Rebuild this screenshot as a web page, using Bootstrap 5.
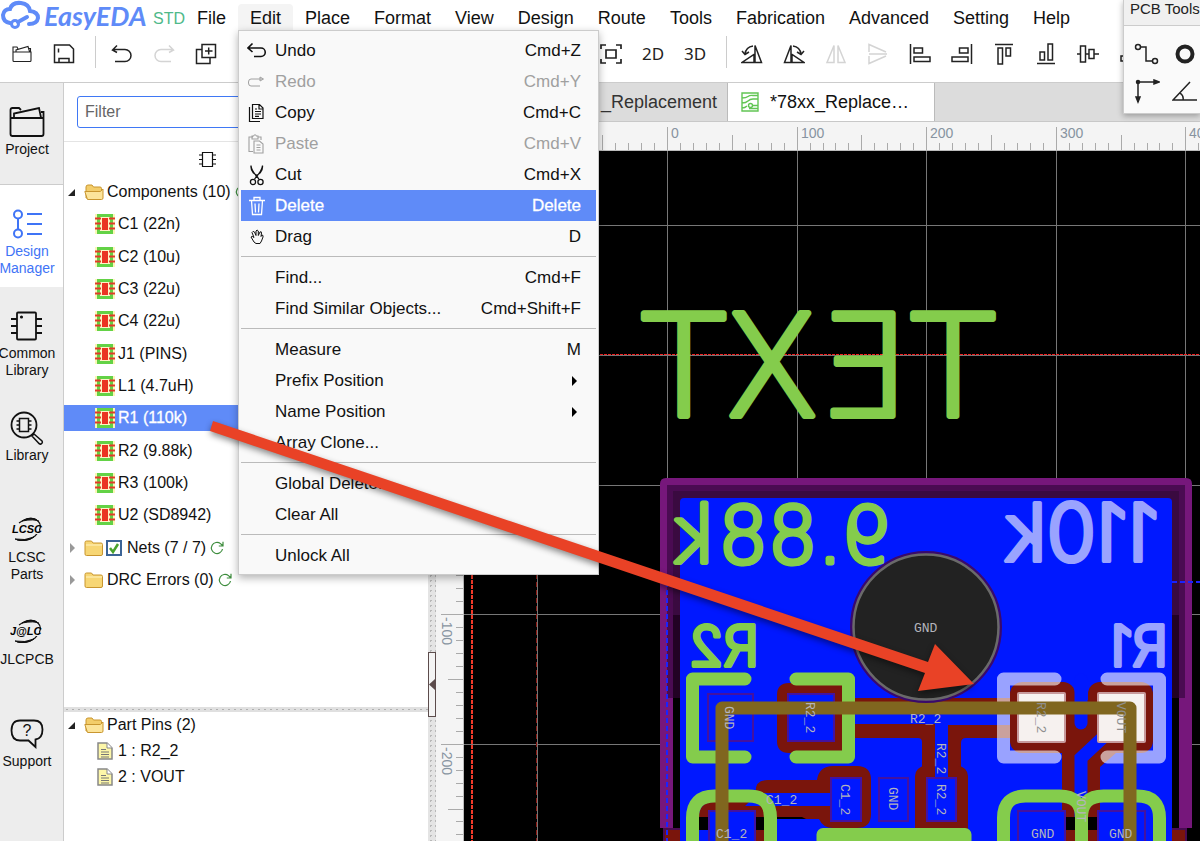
<!DOCTYPE html>
<html lang="en">
<head>
<meta charset="utf-8">
<meta name="viewport" content="width=device-width, initial-scale=1">
<title>EasyEDA STD</title>
<link rel="stylesheet" href="https://cdn.jsdelivr.net/npm/bootstrap@5.3.0/dist/css/bootstrap.min.css">
<style>
:root{--ui-blue:#5f8bf8;--line:#ccc}
body{font-family:"Liberation Sans",Arial,sans-serif;color:#111;background:#fff;line-height:1.25}
svg{display:block;flex:none}
.ico{fill:none;stroke:currentColor;stroke-width:1.5}
.app-head{border-bottom:1px solid var(--line)}
.logo-word{font:italic 700 27px/31px Lato,sans-serif;color:var(--ui-blue);width:105px}
.logo-std{font-size:16px;color:#4fb98a;width:40px;padding-top:9px}
.menu-bar{font-size:18px}
.menu-bar .menu-btn{display:block;border:0;background:none;padding:0 12px;height:28px;line-height:28px;color:#111}
.menu-bar .menu-btn.open{background:#f4f4f4;border-radius:4px 4px 0 0}
.edit-menu{top:26px;left:0;width:361px;z-index:20;background:#f9f9f9;border:1px solid var(--line);box-shadow:0 3px 8px rgba(0,0,0,.3);padding:4px 2px 3px;font-size:17px}
.edit-menu .mi{display:flex;align-items:center;width:100%;height:31px;border:0;background:none;color:#111;padding:0 15px 0 6px;text-align:left}
.edit-menu .mi:disabled{color:#a0a0a0}
.edit-menu .mi.hot{background:var(--ui-blue);color:#fff;-webkit-text-stroke:.3px #fff}
.edit-menu .mi-ico{width:28px;flex:none}
.edit-menu hr{margin:4px 0 5px;border-top:1px solid #bbb;opacity:1}
.tool-row{height:46px;font-size:17px}
.tool-group{margin-top:-3px}
.tool-btn{width:42px;height:42px;border:0;background:none;padding:0;display:flex;align-items:center;justify-content:center;color:#222;flex:none}
.tool-btn:disabled{color:#d4d4d4}
.tool-sep{width:1px;height:32px;background:#ccc;flex:none}
.tool-font{font-family:"Noto Sans",sans-serif;font-size:17px}
.align-set{width:414px}
.side{width:64px;background:#ededed;border-right:1px solid var(--line);font-size:14px;line-height:17px;overflow:hidden}
.side-btn{height:102px;width:63px;border:0;background:none;padding:22px 9px 0 0;display:flex;flex-direction:column;align-items:center;color:#111}
.side-btn .box{height:34px;margin-bottom:2px;display:flex;align-items:center}
.side-btn.line-b{border-bottom:1px solid var(--line)}
.side-btn.now{background:#fff;color:#3f74f6;width:64px;padding-right:10px}
.tree-pane{width:364px;font-size:16px}
.filter-box{border:1px solid #3f78f5;border-radius:3px;height:32px;width:340px;padding:0 7px;font-size:16px;color:#333}
.filter-box::placeholder{color:#666}
.filter-wrap{padding:13px 0 13px 13px;border-bottom:1px solid #e4e4e4}
.tree-list{height:414px}
.row-26{height:26px;display:flex;align-items:center;white-space:nowrap}
.row-26 .row-ico{margin-right:3px}
.leaf{padding-left:30px}
.leaf .row-ico{margin-right:2px}
.leaf.sel{background:var(--ui-blue);color:#fff;-webkit-text-stroke:.3px #fff}
.twist{width:20px;padding-left:3px;flex:none}
.h-split{height:5px;background:#e0e0e0 radial-gradient(#b0b0b0 1px,transparent 1px) 0 0/6px 5px}
.net-check{appearance:none;width:16px;height:16px;border:2px solid #3c6496;background:#fff;margin:0 5px 0 2px;flex:none;background-image:url("data:image/svg+xml,%3Csvg xmlns='http://www.w3.org/2000/svg' viewBox='0 0 12 12'%3E%3Cpath d='M2 6l3 4 5-8' fill='none' stroke='%234aa32c' stroke-width='2.5'/%3E%3C/svg%3E")}
.pins-pane{height:129px}
.v-split{width:8px;background:#e4e4e4 radial-gradient(#b8b8b8 1px,transparent 1px) 0 0/5px 5px}
.v-grip{top:569px;left:0;width:8px;height:65px;background:#f4f4f4;border:1px solid #5c4c4c;padding:0}
.tab-bar{height:39px;background:#dcdcdc;border-bottom:1px solid #c8c8c8;font-size:18px}
.doc-tab{border:0;border-right:1px solid #bbb;background:none;color:#333}
.doc-tab.first-doc{width:292px;padding:0 10px;text-align:right}
.doc-tab.now{width:207px;background:#fff;color:#111;padding:0 13px;display:flex;align-items:center;gap:11px}
.ruler-bg{background:#f4f4f4}
.ruler-bg text{font-size:14px;fill:#8793a0}
.v-rule{width:28px;border-right:1px solid #bbb}
.h-rule{height:29px;border-bottom:1px solid #bbb}
.pcb-area{background:#000}
.pcb-area svg{width:100%;height:100%}
.net-name{font:13px "Liberation Mono",monospace;fill:#b4b4bc}
.silk{font-family:Inter,sans-serif;font-weight:300;stroke-linejoin:round}
.silk .wide{font-family:"DejaVu Sans Light","DejaVu Sans",sans-serif;font-weight:200}
.pcb-tools{top:0;right:0;width:77px;height:114px;background:#fafafa;border:1px solid var(--line);border-width:0 0 1px 1px;box-shadow:0 2px 6px rgba(0,0,0,.3);z-index:15;overflow:hidden}
.pcb-tools .cap{height:26px;background:#f0f0f0;border-bottom:1px solid var(--line);font-size:15px;line-height:17px;padding-left:6px;white-space:nowrap;color:#222}
.pcb-tools .pad-set{width:84px;padding:9px 0 0 4px}
.pcb-tools .tp{border:0;background:none;padding:0;width:38px;height:37px;display:flex;align-items:center;justify-content:center;color:#222}
.note-arrow{inset:0;width:100%;height:100%;z-index:30;pointer-events:none}
</style>
</head>
<body class="vh-100 d-flex flex-column overflow-hidden position-relative">

<svg width="0" height="0" class="position-absolute" aria-hidden="true">
  <symbol id="chip" viewBox="0 0 22 22"><rect x="1" y="1" width="20" height="20" fill="#fbf6b8"/><path d="M4.500 2.500h13v17h-13z" fill="#fdf3c4" stroke="#63d246" stroke-width="3"/><path d="M1 5.500h6M1 10.500h6M1 15.500h6M15 5.500h6M15 10.500h6M15 15.500h6" stroke="#e23a2a" stroke-width="2"/><path d="M8 5h6v12H8z" fill="#ea3323"/></symbol>
  <symbol id="fold" viewBox="0 0 20 18"><path d="M1 15V3.500Q1 2 2.500 2h5L9 4h8q1.500 0 1.500 1.500V15q0 1.500-1.500 1.500H2.500Q1 16.500 1 15z" fill="#f7d674" stroke="#c9962f"/><path d="M2 6h16" stroke="#fff3c0"/></symbol>
  <symbol id="foldopen" viewBox="0 0 20 18"><path d="M2 15V4q0-2 2-2h4l1.500 2H16q1.500 0 1.500 1.500V15z" fill="#f3cd6a" stroke="#c9962f"/><path d="M.8 8.500h15.500L19 6v9q0 1.500-1.500 1.500h-14z" fill="#fce49a" stroke="#c9962f"/></symbol>
  <symbol id="page" viewBox="0 0 16 18"><path d="M1 1h9l5 5v11H1z" fill="#fcf6a8" stroke="#888" stroke-width="1.500"/><path d="M10 1v5h5" fill="#fff" stroke="#888"/><path d="M4 7.500h5M4 10h8M4 12.500h8M4 15h8" stroke="#777"/></symbol>
  <symbol id="again" viewBox="0 0 14 14"><path d="M12.500 8A5.600 5.600 0 1 1 10.500 2.600L12.500 4.500M13 .8V5H8.800" fill="none" stroke="#3c8c3c" stroke-width="1.200"/></symbol>
  <symbol id="oval" viewBox="0 0 34 26"><path d="M9 6Q20-2 28 4Q34 10 25 19Q17 25 7 23" fill="none" stroke="#111" stroke-width="1.200"/><path d="M12 4Q22-2 29 4.500Q25 1.500 12 4zM24 20Q16 26 5 22Q15 24 24 20z" fill="#111" stroke="#111"/></symbol>
</svg>

<header class="app-head">
  <div class="d-flex" style="height:36px">
    <div class="d-flex">
      <svg width="44" height="32" viewBox="0 0 44 32" fill="none" stroke="#5f8bf8" stroke-width="4" stroke-linecap="round"><path d="M10 23Q3 22 3 15Q4 9 10 9Q12 2 21 3Q29 4 30 11Q38 12 38 18Q37 24 29 24"/><circle cx="15" cy="24" r="3.500" stroke-width="3"/><path d="M18 22L27 17"/></svg>
      <span class="logo-word">EasyEDA</span>
      <span class="logo-std ps-1">STD</span>
    </div>
    <nav class="menu-bar d-flex pt-1" aria-label="Main" style="margin-left:-4px">
      <button class="menu-btn">File</button>
      <div class="position-relative">
        <button class="menu-btn open" aria-expanded="true">Edit</button>
        <div class="edit-menu position-absolute" role="menu">
          <button class="mi"><span class="mi-ico"><svg class="ico" width="20" height="20" viewBox="0 0 20 20"><path d="M5.500 2.500L1 7l4.500 4M1 7h13a4 4 0 0 1 0 8.500H7" stroke-width="1.600"/></svg></span>Undo<span class="ms-auto">Cmd+Z</span></button>
          <button class="mi" disabled><span class="mi-ico"><svg class="ico" width="20" height="20" viewBox="0 0 20 20"><path d="M15 7H4q-2.500 0-2.500 3v1q0 3 2.500 3h9M13 5l3.500 2-3.500 2z" stroke-width="1"/></svg></span>Redo<span class="ms-auto">Cmd+Y</span></button>
          <button class="mi"><span class="mi-ico"><svg class="ico" width="20" height="20" viewBox="0 0 20 20"><path d="M5.500 1.500h7l3.500 3.500v10.500H5.500zM12 2v4h4M2.500 4v14.500H13M8 6h2M8 8.500h6M8 11h6M8 13.300h4" stroke-width="1.200"/></svg></span>Copy<span class="ms-auto">Cmd+C</span></button>
          <button class="mi" disabled><span class="mi-ico"><svg class="ico" width="20" height="20" viewBox="0 0 20 20"><path d="M6 3H2v14.500h4M11 3h3v3M5 2h1.500Q8-.5 9.500 2H11v3H5zM7 7h5.500L16 10v9H7zM9.500 11h4M9.500 13.500h4M9.500 16h4" stroke-width="1.100"/></svg></span>Paste<span class="ms-auto">Cmd+V</span></button>
          <button class="mi"><span class="mi-ico"><svg class="ico" width="20" height="22" viewBox="0 0 20 22"><path d="M4 1.500Q4.500 7 12 15M15.500 1.500Q15 7 7.500 15M4 1.500Q3.500 5 6 8.500l5 4M15.500 1.500Q16 5 13.500 8.500l-5 4" stroke-width="1.200"/><circle cx="6" cy="18" r="2.600" stroke-width="1.300"/><circle cx="13.500" cy="18" r="2.600" stroke-width="1.300"/></svg></span>Cut<span class="ms-auto">Cmd+X</span></button>
          <button class="mi hot"><span class="mi-ico"><svg class="ico" width="20" height="20" viewBox="0 0 20 20"><path d="M2 4.500h16M7 4.500V1.500h6v3M4.500 4.500l1 14h9l1-14M8 7.500l.5 9M12 7.500l-.5 9" stroke-width="1.300"/></svg></span>Delete<span class="ms-auto">Delete</span></button>
          <button class="mi"><span class="mi-ico"><svg class="ico" width="20" height="20" viewBox="0 0 20 20"><path d="M7 15L4 10Q5 8.500 7 10.500L5 5.500Q6 3.500 7.500 5L9 8.500V4Q10 2 11.300 4V8.500L13 5Q14.500 4 14.500 6L14 9.500 15 8Q16.500 8 16 10L14.500 14 13 16.500H9z" stroke-width="1"/></svg></span>Drag<span class="ms-auto">D</span></button>
          <hr>
          <button class="mi"><span class="mi-ico"></span>Find...<span class="ms-auto">Cmd+F</span></button>
          <button class="mi"><span class="mi-ico"></span>Find Similar Objects...<span class="ms-auto">Cmd+Shift+F</span></button>
          <hr>
          <button class="mi"><span class="mi-ico"></span>Measure<span class="ms-auto">M</span></button>
          <button class="mi"><span class="mi-ico"></span>Prefix Position<svg class="ms-auto me-1" width="5" height="10"><path d="M0 0l5 5-5 5z"/></svg></button>
          <button class="mi"><span class="mi-ico"></span>Name Position<svg class="ms-auto me-1" width="5" height="10"><path d="M0 0l5 5-5 5z"/></svg></button>
          <button class="mi"><span class="mi-ico"></span>Array Clone...</button>
          <hr>
          <button class="mi"><span class="mi-ico"></span>Global Delete...</button>
          <button class="mi"><span class="mi-ico"></span>Clear All</button>
          <hr>
          <button class="mi"><span class="mi-ico"></span>Unlock All</button>
        </div>
      </div>
      <button class="menu-btn">Place</button>
      <button class="menu-btn">Format</button>
      <button class="menu-btn">View</button>
      <button class="menu-btn">Design</button>
      <button class="menu-btn">Route</button>
      <button class="menu-btn">Tools</button>
      <button class="menu-btn">Fabrication</button>
      <button class="menu-btn">Advanced</button>
      <button class="menu-btn">Setting</button>
      <button class="menu-btn">Help</button>
    </nav>
  </div>

  <div class="tool-row d-flex align-items-start" role="toolbar">
    <div class="tool-group d-flex" style="margin-left:1px;margin-right:10px">
      <button class="tool-btn" aria-label="Open"><svg class="ico" width="20" height="18" viewBox="0 0 20 18"><path d="M1 7V2h4l1 2M1 7h18v8.500q0 1-1 1H2q-1 0-1-1zM4 6.500V5L16 1.500l1.500 5M16 3.500h2.500v3" stroke-width="1.100"/></svg></button>
      <button class="tool-btn" aria-label="Save"><svg class="ico" width="22" height="20" viewBox="0 0 22 20"><path d="M1.500 1h15l4 4v13.500h-19zM6 18.500v-4h10v4M5.500 4.500v4"/></svg></button>
    </div>
    <div class="tool-sep"></div>
    <div class="tool-group d-flex" style="margin-left:5px">
      <button class="tool-btn" aria-label="Undo"><svg class="ico" width="22" height="20" viewBox="0 0 22 20"><path d="M6 1.500L1.500 6 6 8.500M1.500 5.500H14a6 6 0 0 1 0 12H4"/></svg></button>
      <button class="tool-btn" disabled aria-label="Redo"><svg class="ico" width="22" height="20" viewBox="0 0 22 20"><path d="M16 1.500L20.500 6 16 8.500M20.500 5.500H8a6 6 0 0 0 0 12h10"/></svg></button>
      <button class="tool-btn" aria-label="Duplicate"><svg class="ico" width="22" height="22" viewBox="0 0 22 22"><path d="M7 1.500h13.500v13H7zM7 6.500H1.500v14H15v-6M13.700 4.500v7M10 8h7.500"/></svg></button>
      <button class="tool-btn" disabled aria-label="Paste"><svg width="20" height="16"><rect width="20" height="16" rx="2" fill="#e4e4e4"/></svg></button>
    </div>
    <div class="tool-group d-flex tool-font" style="margin-left:321px;margin-right:10px">
      <button class="tool-btn" aria-label="Fit"><svg class="ico" width="22" height="20" viewBox="0 0 22 20"><path d="M1 5V1h5M16 1h5v4M1 15v4h5M16 19h5v-4M6 6h10v8H6z" stroke-width="1.700"/></svg></button>
      <button class="tool-btn">2D</button>
      <button class="tool-btn">3D</button>
    </div>
    <div class="tool-sep"></div>
    <div class="tool-group d-flex justify-content-between align-set ms-1">
      <button class="tool-btn" aria-label="Rotate left"><svg class="ico" width="22" height="20" viewBox="0 0 22 20"><path d="M14 18.500V1.500l6.500 17zM1 18.500h12v-8zM12 2Q5 3 4 10M1 7l3 3.500L8 8"/></svg></button>
      <button class="tool-btn" aria-label="Rotate right"><svg class="ico" width="22" height="20" viewBox="0 0 22 20"><path d="M8 18.500V1.500l-6.500 17zM21 18.500H9v-8zM10 2q7 1 8 8M21 7l-3 3.500L14 8"/></svg></button>
      <button class="tool-btn" disabled aria-label="Flip horizontal"><svg class="ico" width="22" height="20" viewBox="0 0 22 20"><path d="M9 18.500V1.500l-7 17zM13 18.500V1.500l7 17z"/></svg></button>
      <button class="tool-btn" disabled aria-label="Flip vertical"><svg class="ico" width="20" height="22" viewBox="0 0 20 22"><path d="M1 9V1.500L18 9M1 13v7.500L18 13M1 11h18"/></svg></button>
      <button class="tool-btn" aria-label="Align left"><svg class="ico" width="22" height="20" viewBox="0 0 22 20"><path d="M1.500 0v20M5 4h8.500v5H5zM5 13h16v4.500H5z"/></svg></button>
      <button class="tool-btn" aria-label="Align right"><svg class="ico" width="22" height="20" viewBox="0 0 22 20"><path d="M20.500 0v20M17 4H8.500v5H17zM17 13H1v4.500h16z"/></svg></button>
      <button class="tool-btn" aria-label="Align top"><svg class="ico" width="20" height="22" viewBox="0 0 20 22"><path d="M1 1.500h18M4 5v16h4.500V5zM12 5v8h4.500V5z"/></svg></button>
      <button class="tool-btn" aria-label="Align bottom"><svg class="ico" width="20" height="22" viewBox="0 0 20 22"><path d="M1 20.500h18M4 9v8h4.500V9zM12 1v16h4.500V1z"/></svg></button>
      <button class="tool-btn" aria-label="Align middle"><svg class="ico" width="22" height="20" viewBox="0 0 22 20"><path d="M0 10h3.500M8.500 10H12M17 10h5M3.500 2v16h5V2zM12 5.500v9h5v-9z"/></svg></button>
      <button class="tool-btn" aria-label="Align centre"><svg class="ico" width="20" height="20" viewBox="0 0 20 20"><path d="M4 4h12v4H4zM1 12h18v5H1z"/></svg></button>
    </div>
  </div>
</header>

<div class="d-flex flex-grow-1" style="min-height:0">
  <aside class="side flex-shrink-0">
    <button class="side-btn line-b"><span class="box"><svg class="ico" width="36" height="31" viewBox="0 0 36 31"><path d="M1.500 11V3q0-2 2-2H10l2 2M1.500 11h33v16q0 2-2 2h-29q-2 0-2-2zM5 10.500V6.500L30 1l2 9.500M32 5h2.500v6" stroke-width="1.800"/></svg></span>Project</button>
    <button class="side-btn now"><span class="box"><svg class="ico" width="30" height="30" viewBox="0 0 30 30"><circle cx="6" cy="5.500" r="4" stroke-width="2"/><circle cx="6" cy="24.500" r="4" stroke-width="2"/><path d="M6 10v10M15 5h15M15 15h15M15 25h15" stroke-width="2"/></svg></span>Design<br>Manager</button>
    <button class="side-btn"><span class="box"><svg class="ico" width="34" height="30" viewBox="0 0 34 30"><rect x="7" y="1.500" width="19" height="27" rx="1" stroke-width="1.800"/><path d="M1 8h6M1 15h6M1 22h6M26 8h6M26 15h6M26 22h6" stroke-width="1.800"/><circle cx="11.500" cy="6" r=".8"/></svg></span>Common<br>Library</button>
    <button class="side-btn"><span class="box"><svg class="ico" width="34" height="34" viewBox="0 0 34 34"><circle cx="14" cy="14" r="12.500" stroke-width="1.800"/><path d="M22 25l2-2 8 7q1 2-1 3-1.500.5-2.500-1zM9.500 7.500h9v13h-9zM6.500 10h3M6.500 14h3M6.500 18h3M18.500 10h3M18.500 14h3M18.500 18h3"/></svg></span>Library</button>
    <button class="side-btn"><span class="box"><svg width="34" height="26" viewBox="0 0 34 26"><use href="#oval"/><rect x="2" y="7" width="27" height="10" fill="#ededed"/><text x="2" y="16" font-size="11" font-weight="700" font-style="italic">LCSC</text></svg></span>LCSC<br>Parts</button>
    <button class="side-btn"><span class="box"><svg width="34" height="26" viewBox="0 0 34 26"><use href="#oval"/><rect x="2" y="7" width="27" height="10" fill="#ededed"/><text x="0" y="16" font-size="11" font-weight="700" font-style="italic">J@LC</text></svg></span>JLCPCB</button>
    <button class="side-btn"><span class="box"><svg class="ico" width="34" height="30" viewBox="0 0 34 30"><path d="M10 1.500h14q8.500 0 8.500 9t-7 10V28l-7-6.500H10q-8.500 0-8.500-10t8.500-10z" stroke-width="1.800"/><text x="17" y="17" text-anchor="middle" font-size="16" fill="#111" stroke="none">?</text></svg></span>Support</button>
  </aside>

  <section class="tree-pane flex-shrink-0 d-flex flex-column">
    <div class="filter-wrap">
      <label class="visually-hidden" for="filter">Filter</label>
      <input id="filter" class="filter-box" placeholder="Filter">
    </div>
    <div style="height:37px;padding:9px 0 0 134px"><svg class="ico" width="20" height="17" viewBox="0 0 20 17"><path d="M4.500 1.500h10v14h-10zM1 4h3.500M1 8.500h3.500M1 13h3.500M14.500 4H18M14.500 8.500H18M14.500 13H18" stroke-width="1.200"/></svg></div>
    <ul class="tree-list list-unstyled m-0 d-flex flex-column justify-content-between" id="parts">
      <li class="row-26"><span class="twist"><svg width="9" height="9"><path d="M8 1v7H1z" fill="#222"/></svg></span><svg width="20" height="18" class="row-ico"><use href="#foldopen"/></svg>Components (10)<svg width="14" height="14" class="ms-1"><use href="#again"/></svg></li>
      <li class="row-26"><span class="twist"><svg width="9" height="12"><path d="M3 1l5 5-5 5z" fill="#999"/></svg></span><svg width="20" height="18"><use href="#fold"/></svg><input class="net-check" type="checkbox" id="nets" checked><label for="nets">Nets (7 / 7)</label><svg width="14" height="14" class="ms-1"><use href="#again"/></svg></li>
      <li class="row-26"><span class="twist"><svg width="9" height="12"><path d="M3 1l5 5-5 5z" fill="#999"/></svg></span><svg width="20" height="18" class="row-ico"><use href="#fold"/></svg>DRC Errors (0)<svg width="14" height="14" class="ms-1"><use href="#again"/></svg></li>
    </ul>
    <div class="flex-grow-1"></div>
    <div class="h-split"></div>
    <ul class="pins-pane list-unstyled m-0">
      <li class="row-26"><span class="twist"><svg width="9" height="9"><path d="M8 1v7H1z" fill="#222"/></svg></span><svg width="20" height="18" class="row-ico"><use href="#foldopen"/></svg>Part Pins (2)</li>
      <li class="row-26 leaf"><svg width="22" height="18" class="row-ico"><use href="#page"/></svg>1 : R2_2</li>
      <li class="row-26 leaf"><svg width="22" height="18" class="row-ico"><use href="#page"/></svg>2 : VOUT</li>
    </ul>
  </section>

  <div class="v-split flex-shrink-0 position-relative"><button class="v-grip position-absolute" aria-label="Collapse panel"><svg width="6" height="63"><path d="M6 26v11L0 31.500z" fill="#5c4c4c"/></svg></button></div>

  <main class="flex-grow-1 d-flex flex-column" style="min-width:0">
    <div class="tab-bar d-flex flex-shrink-0">
      <button class="doc-tab first-doc">_Replacement</button>
      <button class="doc-tab now"><svg width="18" height="20" viewBox="0 0 18 20" fill="none" stroke="#62c554" stroke-width="1.400"><path d="M1 1h16v18H1zM1 6Q5 6 7 4.500T12 3.500h5M1 11q4 0 6-2t5-2h5M1 16q3 0 5-2M11.500 13.500H17M8 16.500h9"/><circle cx="9.500" cy="13.500" r="2"/></svg>*78xx_Replace…</button>
    </div>
    <div class="h-rule ruler-bg flex-shrink-0"><svg width="100%" height="28"><g id="hticks" transform="translate(-436 -122)"></g></svg></div>
    <div class="d-flex flex-grow-1" style="min-height:0">
      <div class="v-rule ruler-bg flex-shrink-0 overflow-hidden"><svg width="28" height="100%"><g id="vticks" transform="translate(-436 -151)"></g></svg></div>
      <div class="pcb-area flex-grow-1 overflow-hidden">
        <svg role="img" aria-label="PCB layout"><g transform="translate(-464 -151)">
          <g id="grid" stroke="#777" stroke-width="1"></g>
          <path d="M472 150V1400" stroke="#f03a2a" stroke-width="2" stroke-dasharray="4 1"/>
          <path d="M536.500 150V1400" stroke="#8c1a14" stroke-dasharray="5 3"/>
          <path d="M464 354.500H2400" stroke="#f02020" stroke-dasharray="3 1"/>

          <!-- board frame -->
          <path d="M660 698V484q0-6 6-6h520q6 0 6 6v214z" fill="#76177b"/>
          <path d="M660 690h13v138h-13zM1179 690h13v138h-13z" fill="#76177b"/>
          <path d="M667 485h518v213H667z" fill="#4a0b52"/>
          <path d="M673 491h506v207H673z" fill="#3a0a40"/>
          <path d="M673 615h506v83H673z" fill="#220224"/>
          <path d="M673 698h506v143H673z" fill="#000"/>
          <path d="M664 829h522v60H664z" fill="#7a150c" stroke="#4a0b52" stroke-width="2"/>
          <rect x="680" y="498" width="492" height="500" rx="4" fill="#0018ff"/>
          <path d="M667 582V900M1172 582H2400" stroke="#1a22ff" stroke-width="2" stroke-dasharray="5 3"/>

          <!-- copper -->
          <g fill="#7a150c">
            <path d="M842 683h-53q-12 0-12 12v46q0 12 12 12h53z"/>
            <path d="M833 724h102v117h-20v-58q0-8 7-15v-26q0-4-4-4h-85z"/>
            <path d="M840 698h200v10H840zM948 725h80v13h-62q-5 0-5 5v24q7 6 7 14v48h-33v-50h13z"/>
            <path d="M699 820v-6q2-12 14-12h35l8-8q-2-14 12-14h49q2-14 16-14h24q14 0 14 14v34q0 14-14 14h-24q-10 0-14-9h-65l-5 22z"/>
            <rect x="1010" y="682" width="65" height="71" rx="12"/>
            <rect x="1088" y="682" width="65" height="71" rx="12"/>
            <path d="M1062 700h38v117h-38zM1088 817v-58l20-18h20v12h-12l-16 14v50z"/>
            <rect x="915" y="766" width="53" height="63" rx="10"/>
          </g>
          <path d="M1081 680V723" stroke="#0018ff" stroke-width="13" stroke-linecap="round"/>
          <path d="M1081 817V758L1110 731" stroke="#0018ff" stroke-width="13" fill="none"/>
          <path d="M935 720h13v60h-13zM758 793h74v13h-87z" fill="#0018ff"/>
          <path d="M699 817h73v13h-73zM777 817h25l4 2h-29zM1065 817h33v13h-33z" fill="#000"/>
          <path d="M755 830h20v20h-20zM1065 830h33v20h-33z" fill="#7a150c"/>
          <g fill="#0018ff" stroke="#4412a0" stroke-width="2">
            <rect x="708" y="694" width="45" height="47"/><rect x="788" y="694" width="46" height="47"/>
            <rect x="831" y="778" width="30" height="43"/><rect x="879" y="778" width="29" height="43"/>
            <rect x="927" y="778" width="29" height="43"/><rect x="709" y="811" width="46" height="50"/>
            <rect x="1018" y="811" width="47" height="50"/><rect x="1098" y="811" width="47" height="50"/>
          </g>

          <!-- silkscreen -->
          <g fill="none" stroke="#84cc4c" stroke-width="13" stroke-linecap="round" stroke-linejoin="round">
            <path d="M745 679H692.500V757H745M796 679H848.500V757H796"/>
            <path d="M692.500 850V818q0-22 22-22h34q22 0 22 22v32M1003.500 850V818q0-22 22-22h34q22 0 22 22v32M1081.500 850V818q0-22 22-22h34q22 0 22 22v32M823 834.500H965V850H823z"/>
          </g>
          <path d="M1055 679H1003.500V757H1055M1107 679H1159.500V757H1107" fill="none" stroke="#fff" stroke-opacity=".6" stroke-width="13" stroke-linecap="round" stroke-linejoin="round"/>
          <g fill="#f6f1ef" stroke="#c79a9c" stroke-width="2"><rect x="1018" y="693" width="47" height="49" rx="1"/><rect x="1098" y="693" width="47" height="49" rx="1"/></g>
          <path d="M722 860V708H1130V860" fill="none" stroke="#80661f" stroke-width="13" stroke-linejoin="round"/>

          <circle cx="926" cy="627" r="74.500" fill="#222" stroke="#3a0a6a" stroke-width="3"/>
          <circle cx="926" cy="627" r="72.500" fill="none" stroke="#6a6a6a" stroke-width="2.500"/>

          <g class="silk" fill="#84cc4c" stroke="#84cc4c">
            <text class="wide" transform="translate(996 416) scale(-1 1)" font-size="141" stroke-width="6">TEXT</text>
            <text class="wide" transform="translate(892 563) scale(-1 1)" font-size="78" stroke-width="5">9.88k</text>
            <text transform="translate(759 666) scale(-1 1)" font-size="56" stroke-width="4">R2</text>
          </g>
          <g class="silk" fill="#9aa3ff" stroke="#9aa3ff">
            <text transform="translate(1159 561) scale(-1 1)" font-size="80" stroke-width="4">110k</text>
            <text transform="translate(1168 666) scale(-1 1)" font-size="56" stroke-width="4">R1</text>
          </g>

          <g class="net-name">
            <text x="914" y="632">GND</text><text x="910" y="723">R2_2</text>
            <text x="766" y="804">C1_2</text><text x="716" y="838">C1_2</text>
            <text x="1031" y="838">GND</text><text x="1109" y="838">GND</text>
            <text transform="translate(725 706) rotate(90)">GND</text>
            <text transform="translate(806 702) rotate(90)">R2_2</text>
            <text transform="translate(841 784) rotate(90)">C1_2</text>
            <text transform="translate(889 787) rotate(90)">GND</text>
            <text transform="translate(937 743) rotate(90)">R2_2</text>
            <text transform="translate(937 784) rotate(90)">R2_2</text>
            <text transform="translate(1077 791) rotate(90)">VOUT</text>
            <g fill="#8f8f8f"><text transform="translate(1037 702) rotate(90)">R2_2</text><text transform="translate(1117 702) rotate(90)">VOUT</text></g>
          </g>
        </g></svg>
      </div>
    </div>
  </main>
</div>

<div class="pcb-tools position-absolute">
  <div class="cap">PCB Tools</div>
  <div class="pad-set d-flex flex-wrap">
    <button class="tp" aria-label="Track"><svg class="ico" width="26" height="22" viewBox="0 0 26 22"><circle cx="4" cy="4" r="2.500"/><circle cx="21" cy="18" r="2.500"/><path d="M6.500 4H12v14h6.500"/></svg></button>
    <button class="tp" aria-label="Pad"><svg class="ico" width="22" height="22" viewBox="0 0 22 22"><circle cx="11" cy="11" r="7.500" stroke-width="4"/></svg></button>
    <button class="tp" aria-label="Canvas origin"><svg class="ico" width="26" height="26" viewBox="0 0 26 26"><path d="M4 24V4h20" /><path d="M20 2l5 2-5 2zM2 19l2 5 2-5z" fill="currentColor"/><circle cx="4" cy="4" r="1.500" fill="currentColor"/></svg></button>
    <button class="tp" aria-label="Protractor"><svg class="ico" width="26" height="22" viewBox="0 0 26 22"><path d="M18 2L1 20h24M8 13q4 3 3 7"/></svg></button>
  </div>
</div>

<svg class="note-arrow position-absolute" aria-hidden="true"><path d="M213 421L928 662L935 644L974 684L918 691L925 673L210 431z" fill="#e94226" style="filter:drop-shadow(0 3px 3px rgba(0,0,0,.45))"/></svg>

<script>
// component rows of the design tree
const parts=['C1 (22n)','C2 (10u)','C3 (22u)','C4 (22u)','J1 (PINS)','L1 (4.7uH)','R1 (110k)','R2 (9.88k)','R3 (100k)','U2 (SD8942)'];
document.querySelector('#parts li').insertAdjacentHTML('afterend',parts.map(p=>
  `<li class="row-26 leaf${p.startsWith('R1')?' sel':''}"><svg width="22" height="22" class="row-ico"><use href="#chip"/></svg>${p}</li>`).join(''));

// rulers and grid: 100 units are 129.6 px, the origin is at (668, 485)
const unit=129.6,ox=668,oy=485.500;let h='',v='',g='';
for(let i=-25;i<150;i++){
  const x=Math.round(ox+i*unit/10)+.5,y=Math.round(oy+i*unit/10)-.5;
  const a=i%10===0?0:i%5===0?8:16;
  if(x>436&&x<innerWidth){
    h+=`<path d="M${x-1} ${127+a}V150" stroke="#aaa"/>`;
    if(!a&&i>=0)h+=`<text x="${Math.round(x)+2}" y="138">${i*10}</text>`;
    if(!a)g+=`<path d="M${x-1} 150V2000"/>`;
  }
  if(y>150&&y<innerHeight){
    v+=`<path d="M${441+(a?a-1:0)} ${y}H464" stroke="#aaa"/>`;
    if(!a)v+=`<text transform="translate(442 ${Math.round(y)+2}) rotate(90)">${-i*10}</text>`;
    if(!a)g+=`<path d="M464 ${y}H3000"/>`;
  }
}
hticks.innerHTML=h;vticks.innerHTML=v;grid.innerHTML=g;
</script>
<script src="https://cdn.jsdelivr.net/npm/bootstrap@5.3.0/dist/js/bootstrap.bundle.min.js"></script>
</body>
</html>
